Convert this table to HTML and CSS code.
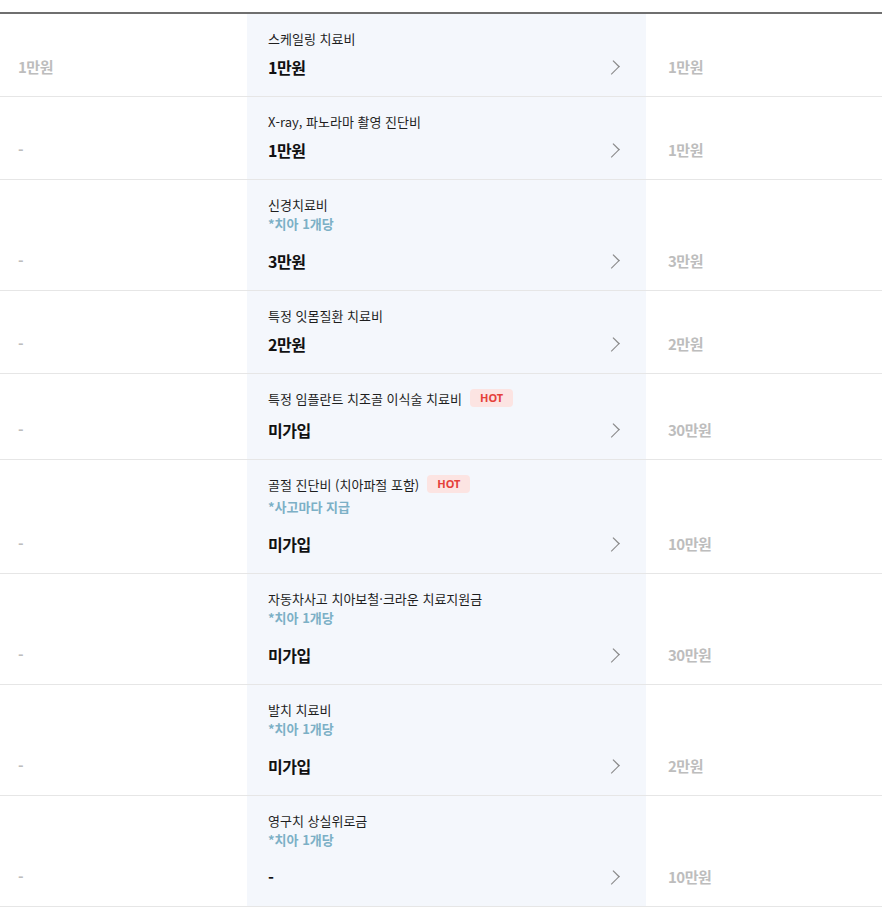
FILE: index.html
```html
<!DOCTYPE html>
<html lang="ko">

<head>
    <meta charset="utf-8">
    <link rel="stylesheet" href="styles.css">
</head>

<body>

    <div id="compare-table">
        <div class="row">
            <div class="side-cell">1만원</div>
            <div class="main-cell">
                <div class="item-title">스케일링 치료비</div>
                <div class="item-value"><span>1만원</span><span class="chevron"></span></div>
            </div>
            <div class="side-cell">1만원</div>
        </div>
        <div class="row">
            <div class="side-cell">-</div>
            <div class="main-cell">
                <div class="item-title">X-ray, 파노라마 촬영 진단비</div>
                <div class="item-value"><span>1만원</span><span class="chevron"></span></div>
            </div>
            <div class="side-cell">1만원</div>
        </div>
        <div class="row">
            <div class="side-cell">-</div>
            <div class="main-cell">
                <div class="item-title">신경치료비</div>
                <div class="item-note">*치아 1개당</div>
                <div class="item-value"><span>3만원</span><span class="chevron"></span></div>
            </div>
            <div class="side-cell">3만원</div>
        </div>
        <div class="row">
            <div class="side-cell">-</div>
            <div class="main-cell">
                <div class="item-title">특정 잇몸질환 치료비</div>
                <div class="item-value"><span>2만원</span><span class="chevron"></span></div>
            </div>
            <div class="side-cell">2만원</div>
        </div>
        <div class="row">
            <div class="side-cell">-</div>
            <div class="main-cell">
                <div class="item-title">특정 임플란트 치조골 이식술 치료비 <span class="hot">HOT</span></div>
                <div class="item-value"><span>미가입</span><span class="chevron"></span></div>
            </div>
            <div class="side-cell">30만원</div>
        </div>
        <div class="row">
            <div class="side-cell">-</div>
            <div class="main-cell">
                <div class="item-title">골절 진단비 (치아파절 포함) <span class="hot">HOT</span></div>
                <div class="item-note">*사고마다 지급</div>
                <div class="item-value"><span>미가입</span><span class="chevron"></span></div>
            </div>
            <div class="side-cell">10만원</div>
        </div>
        <div class="row">
            <div class="side-cell">-</div>
            <div class="main-cell">
                <div class="item-title">자동차사고 치아보철·크라운 치료지원금</div>
                <div class="item-note">*치아 1개당</div>
                <div class="item-value"><span>미가입</span><span class="chevron"></span></div>
            </div>
            <div class="side-cell">30만원</div>
        </div>
        <div class="row">
            <div class="side-cell">-</div>
            <div class="main-cell">
                <div class="item-title">발치 치료비</div>
                <div class="item-note">*치아 1개당</div>
                <div class="item-value"><span>미가입</span><span class="chevron"></span></div>
            </div>
            <div class="side-cell">2만원</div>
        </div>
        <div class="row">
            <div class="side-cell">-</div>
            <div class="main-cell">
                <div class="item-title">영구치 상실위로금</div>
                <div class="item-note">*치아 1개당</div>
                <div class="item-value"><span>-</span><span class="chevron"></span></div>
            </div>
            <div class="side-cell">10만원</div>
        </div>
    </div>

</body>

</html>
```

FILE: styles.css
```css
body {
    margin: 0;
    padding-top: 12px;
    background-color: #ffffff;
    font-family: "Noto Sans CJK KR", "Noto Sans", sans-serif;
    color: #222222;
}

#compare-table {
    border-top: 2px solid #6f6f6f;
}

.row {
    display: grid;
    grid-template-columns: 247px 399px 1fr;
    border-bottom: 1px solid #e6e6e6;
}

.side-cell {
    align-self: end;
    padding: 0 0 17px 18px;
    height: 24px;
    line-height: 24px;
    font-size: 15px;
    font-weight: bold;
    color: #bdbdbd;
    letter-spacing: -0.5px;
}

.row .side-cell:last-child {
    padding-left: 22px;
}

.main-cell {
    background-color: #f4f7fc;
    padding: 15px 24px 17px 21px;
}

.item-title {
    display: flex;
    align-items: flex-start;
    gap: 8px;
    font-size: 13px;
    line-height: 20px;
    color: #1e1e1e;
}

.hot {
    display: inline-block;
    height: 18px;
    line-height: 18px;
    padding: 0 10px;
    margin-bottom: 5px;
    border-radius: 4px;
    background-color: #fce4e2;
    color: #e5413a;
    font-size: 11px;
    font-weight: bold;
    font-family: "Noto Sans", sans-serif;
}

.item-note {
    font-size: 13px;
    line-height: 18px;
    font-weight: bold;
    color: #7cb0c6;
    margin-bottom: 16px;
}

.item-value {
    display: flex;
    justify-content: space-between;
    align-items: center;
    margin-top: 6px;
    height: 24px;
    font-size: 16px;
    font-weight: bold;
    color: #111111;
    letter-spacing: -0.5px;
}

.chevron {
    width: 8px;
    height: 8px;
    margin-right: 5px;
    border-top: 1px solid #8a8a8a;
    border-right: 1px solid #8a8a8a;
    transform: rotate(45deg) scaleY(1.3);
}
```
